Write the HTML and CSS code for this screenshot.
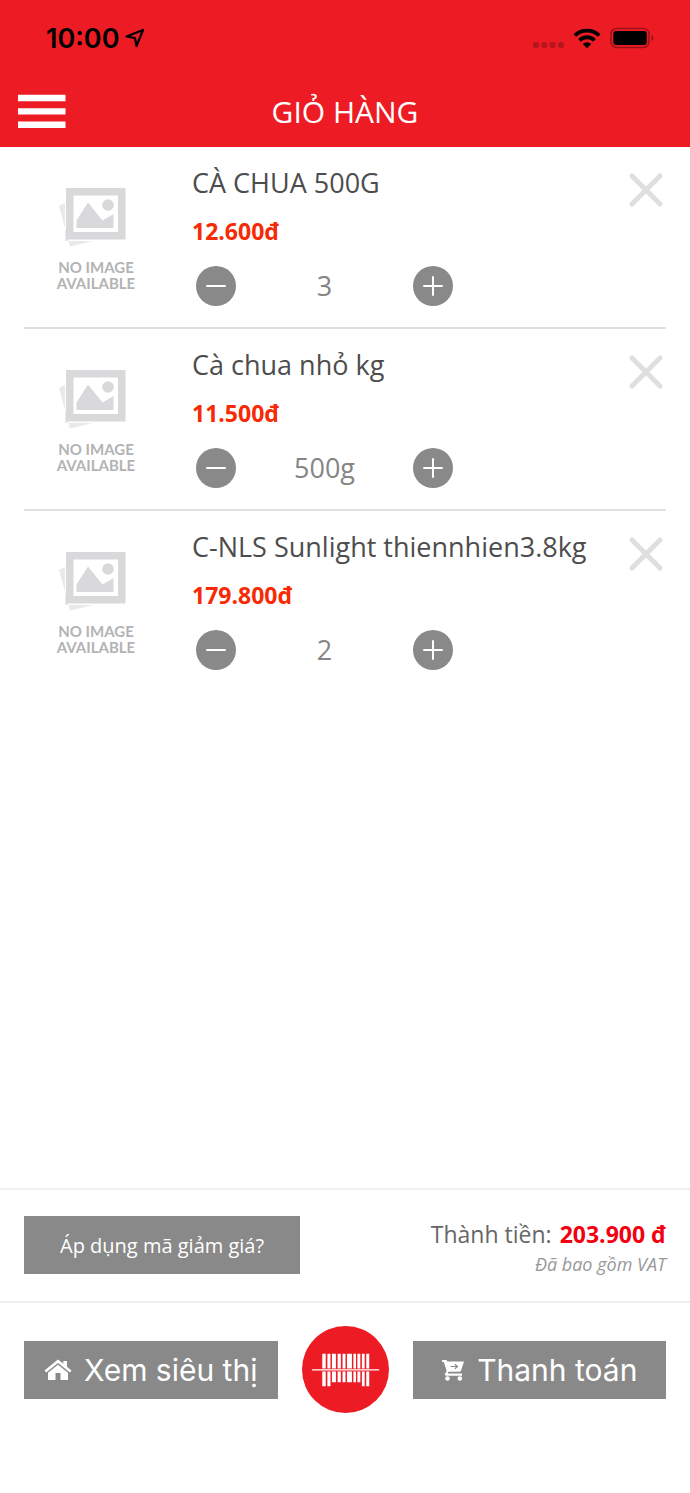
FILE: index.html
```html
<!DOCTYPE html>
<html lang="vi">
<head>
<meta charset="utf-8">
<meta name="viewport" content="width=device-width, initial-scale=1">
<title>Giỏ hàng</title>
<link rel="stylesheet" href="styles.css">
</head>
<body>
<svg class="sprite" aria-hidden="true">
  <symbol id="no-image" viewBox="0 0 68 60">
    <path fill="#e9e9eb" d="M0 19 6 16v38h28L11 59.500z"/>
    <path fill="#d9d9dc" fill-rule="evenodd" d="M7 1h59.500v51.500H7zM14.500 8.500v36.500H59V8.500z"/>
    <path fill="#d9d9dc" d="M17.500 41v-7.500L29 15.500 43.500 33.500 54.500 27v14z"/>
    <circle fill="#d9d9dc" cx="49" cy="18" r="5.800"/>
  </symbol>
  <symbol id="minus" viewBox="0 0 40 40">
    <path d="M11 20h18" stroke="#fff" stroke-width="2" stroke-linecap="round"/>
  </symbol>
  <symbol id="plus" viewBox="0 0 40 40">
    <path d="M11 20h18M20 11v18" stroke="#fff" stroke-width="2" stroke-linecap="round"/>
  </symbol>
  <symbol id="cross" viewBox="0 0 36 36">
    <path d="M4 4l28 28M32 4L4 32" stroke="#dfdfdf" stroke-width="5" stroke-linecap="round"/>
  </symbol>
</svg>
<div class="app">
  <header class="header">
    <div class="status">
      <span class="status-left">
        <time class="clock">10:00</time>
        <svg width="20" height="20" viewBox="0 0 20 20" fill="none" stroke="#000" stroke-width="2.200" stroke-linejoin="round"><path d="M1.500 8.500 18 2 11.500 18 10 10z"/></svg>
      </span>
      <span class="status-right">
        <svg width="32" height="24" viewBox="0 0 32 24" fill="#b8161d"><rect x="1" y="16" width="6" height="6" rx="2"/><rect x="9.300" y="16" width="6" height="6" rx="2"/><rect x="17.600" y="16" width="6" height="6" rx="2"/><rect x="26" y="16" width="6" height="6" rx="2"/></svg>
        <svg width="28" height="22" viewBox="0 0 28 22"><g fill="none" stroke="#000" stroke-width="3.800"><path d="M1.800 8.500a17.500 17.500 0 0 1 24.400 0"/><path d="M6.500 13.300a10.800 10.800 0 0 1 15 0"/></g><path d="M14 21.200 9.800 17a6 6 0 0 1 8.400 0z"/></svg>
        <svg width="44" height="22" viewBox="0 0 44 22"><rect x="1" y="1.500" width="38" height="19" rx="5.500" fill="none" stroke="#9c1218" stroke-width="1.500"/><rect x="3.300" y="4" width="33.500" height="14" rx="3" fill="#000"/><path d="M41.500 7.500a4 4 0 0 1 0 7z" fill="#9c1218"/></svg>
      </span>
    </div>
    <div class="titlebar">
      <button class="icon-button menu" aria-label="Menu">
        <svg width="48" height="36" viewBox="0 0 48 36" fill="#fff"><path d="M0 .8h47.500v6.400H0zM0 14.300h47.500v6.200H0zM0 27.600h47.500V34H0z"/></svg>
      </button>
      <h1 class="title">GIỎ HÀNG</h1>
    </div>
  </header>

  <main class="cart">
    <article class="item">
      <div class="thumb"><svg class="thumb-art"><use href="#no-image"/></svg><div class="thumb-text"><p>NO IMAGE</p><p>AVAILABLE</p></div></div>
      <div class="info">
        <h2 class="name">CÀ CHUA 500G</h2>
        <p class="price">12.600đ</p>
        <div class="stepper">
          <button class="round" aria-label="Giảm"><svg><use href="#minus"/></svg></button>
          <output class="quantity">3</output>
          <button class="round" aria-label="Tăng"><svg><use href="#plus"/></svg></button>
        </div>
      </div>
      <button class="icon-button remove" aria-label="Xóa"><svg><use href="#cross"/></svg></button>
    </article>
    <article class="item">
      <div class="thumb"><svg class="thumb-art"><use href="#no-image"/></svg><div class="thumb-text"><p>NO IMAGE</p><p>AVAILABLE</p></div></div>
      <div class="info">
        <h2 class="name">Cà chua nhỏ kg</h2>
        <p class="price">11.500đ</p>
        <div class="stepper">
          <button class="round" aria-label="Giảm"><svg><use href="#minus"/></svg></button>
          <output class="quantity">500g</output>
          <button class="round" aria-label="Tăng"><svg><use href="#plus"/></svg></button>
        </div>
      </div>
      <button class="icon-button remove" aria-label="Xóa"><svg><use href="#cross"/></svg></button>
    </article>
    <article class="item">
      <div class="thumb"><svg class="thumb-art"><use href="#no-image"/></svg><div class="thumb-text"><p>NO IMAGE</p><p>AVAILABLE</p></div></div>
      <div class="info">
        <h2 class="name">C-NLS Sunlight thiennhien3.8kg</h2>
        <p class="price">179.800đ</p>
        <div class="stepper">
          <button class="round" aria-label="Giảm"><svg><use href="#minus"/></svg></button>
          <output class="quantity">2</output>
          <button class="round" aria-label="Tăng"><svg><use href="#plus"/></svg></button>
        </div>
      </div>
      <button class="icon-button remove" aria-label="Xóa"><svg><use href="#cross"/></svg></button>
    </article>
  </main>

  <section class="summary">
    <button class="coupon">Áp dụng mã giảm giá?</button>
    <div class="totals">
      <p class="total"><span>Thành tiền:</span><strong>203.900 đ</strong></p>
      <p class="vat">Đã bao gồm VAT</p>
    </div>
  </section>

  <footer class="actions">
    <button class="action">
      <svg width="28" height="24" viewBox="0 0 28 24" fill="#fff"><path d="M14 1.500 0.500 12.500l1.600 2L14 5l11.900 9.500 1.600-2-4.500-3.700V3h-3.700v2.800z"/><path d="M14 6.700 4 14.700V22h7.500v-7h5v7H24v-7.300z"/></svg>
      <span>Xem siêu thị</span>
    </button>
    <button class="scan" aria-label="Quét mã vạch">
      <svg viewBox="0 0 88 88" fill="#fff"><path d="M20.500 28h3.500v33h-3.500zM25.700 28h3.100v33h-3.100zM30.300 28h4v29h-4zM36 28h3.300v29H36zM41 28h3v29h-3zM45.500 28h5v29h-5zM52 28h2.600v29H52zM56 28h3v29h-3zM60.600 28h2.800v33h-2.800zM65 28h3v33h-3z"/><path fill="#ed1c24" d="M10 43h68v3H10z"/><path d="M10 43.800h68v1.300H10z"/></svg>
    </button>
    <button class="action">
      <svg width="24" height="24" viewBox="0 0 24 24"><path fill="#fff" d="M1 2h4.500l.8 1.500H23l-3 9.200-1.200 1H7.300L6.500 15.500H21v2.300H4.800L3.700 16.500l2-3.500L2.800 4H1z"/><circle cx="6.500" cy="20.500" r="2.300" fill="#fff"/><circle cx="18.800" cy="20.500" r="2.300" fill="#fff"/><path d="M9.500 8.500H16M14 6.300l2.400 2.200-2.400 2.200" fill="none" stroke="#898989" stroke-width="1.200"/></svg>
      <span>Thanh toán</span>
    </button>
  </footer>
</div>
</body>
</html>
```
FILE: styles.css
```css
* {
  box-sizing: border-box;
}

body,
h1,
h2,
p {
  margin: 0;
}

body {
  background: #fff;
  font-family: "Open Sans", "Noto Sans", sans-serif;
}

button {
  border: 0;
  border-radius: 0;
  padding: 0;
  font: inherit;
  cursor: pointer;
}

svg {
  display: block;
  flex: none;
}

.sprite {
  position: absolute;
  width: 0;
  height: 0;
}

.app {
  display: flex;
  flex-direction: column;
  min-height: 100vh;
}

.header {
  background: #ed1c24;
}

.status {
  display: flex;
  justify-content: space-between;
  align-items: center;
  height: 76px;
  padding: 0 36px 0 46px;
}

.status-left,
.status-right {
  display: flex;
  align-items: center;
  gap: 6px;
}

.status-right {
  gap: 9px;
}

.clock {
  font-family: Inter, sans-serif;
  font-size: 27px;
  font-weight: 600;
}

.titlebar {
  display: grid;
  grid-template-columns: 48px 1fr 48px;
  align-items: center;
  height: 71px;
  padding: 0 18px;
}

.icon-button {
  background: none;
}

.title {
  color: #fff;
  font-size: 30px;
  font-weight: 400;
  line-height: 40px;
  text-align: center;
}

.cart {
  flex: 1;
  padding: 0 24px;
}

.item {
  display: flex;
  align-items: flex-start;
  padding: 16px 0 21px;
  border-bottom: 2px solid #e0e0e0;
}

.item:last-child {
  border-bottom: 0;
}

.thumb {
  display: flex;
  flex-direction: column;
  align-items: center;
  gap: 12px;
  width: 144px;
  padding-top: 24px;
}

.thumb-art {
  width: 68px;
  height: 60px;
  margin-right: 6px;
}

.thumb-text {
  color: #b3b3b3;
  font-family: Lato, sans-serif;
  font-size: 15px;
  font-weight: 700;
  line-height: 16px;
  text-align: center;
}

.info {
  flex: 1;
  padding-left: 24px;
}

.name {
  color: #4d4d4d;
  font-size: 27px;
  font-weight: 400;
  line-height: 40px;
}

.price {
  margin-top: 12px;
  color: #f62a05;
  font-size: 23px;
  font-weight: 700;
  line-height: 32px;
}

.stepper {
  display: flex;
  align-items: center;
  width: 266px;
  margin-top: 19px;
  padding: 0 5px 0 4px;
}

.round {
  width: 40px;
  height: 40px;
  border-radius: 50%;
  background: #898989;
}

.round svg {
  width: 40px;
  height: 40px;
}

.quantity {
  flex: 1;
  color: #858585;
  font-size: 27px;
  line-height: 40px;
  text-align: center;
}

.remove {
  margin: 9px 2px 0 0;
}

.remove svg {
  width: 36px;
  height: 36px;
}

.summary {
  display: flex;
  justify-content: space-between;
  align-items: flex-start;
  padding: 26px 24px 23px;
  border-top: 2px solid #f0f0f2;
  border-bottom: 2px solid #f0f0f2;
}

.coupon {
  height: 58px;
  padding: 0 36px;
  background: #898989;
  color: #fff;
  font-size: 20px;
}

.totals {
  padding-top: 2px;
  text-align: right;
}

.total {
  display: flex;
  gap: 8px;
  color: #666;
  font-size: 23px;
  line-height: 32px;
}

.total strong {
  color: #f20010;
}

.vat {
  color: #999;
  font-size: 18px;
  font-style: italic;
  line-height: 28px;
}

.actions {
  display: flex;
  align-items: center;
  gap: 24px;
  padding: 23px 24px 80px;
}

.action {
  display: flex;
  flex: 1;
  align-items: center;
  justify-content: center;
  gap: 12px;
  height: 58px;
  background: #898989;
  color: #fff;
  font-family: Inter, "Open Sans", sans-serif;
  font-size: 30px;
}

.scan {
  width: 87px;
  height: 87px;
  border-radius: 50%;
  background: #ed1c24;
}
```
